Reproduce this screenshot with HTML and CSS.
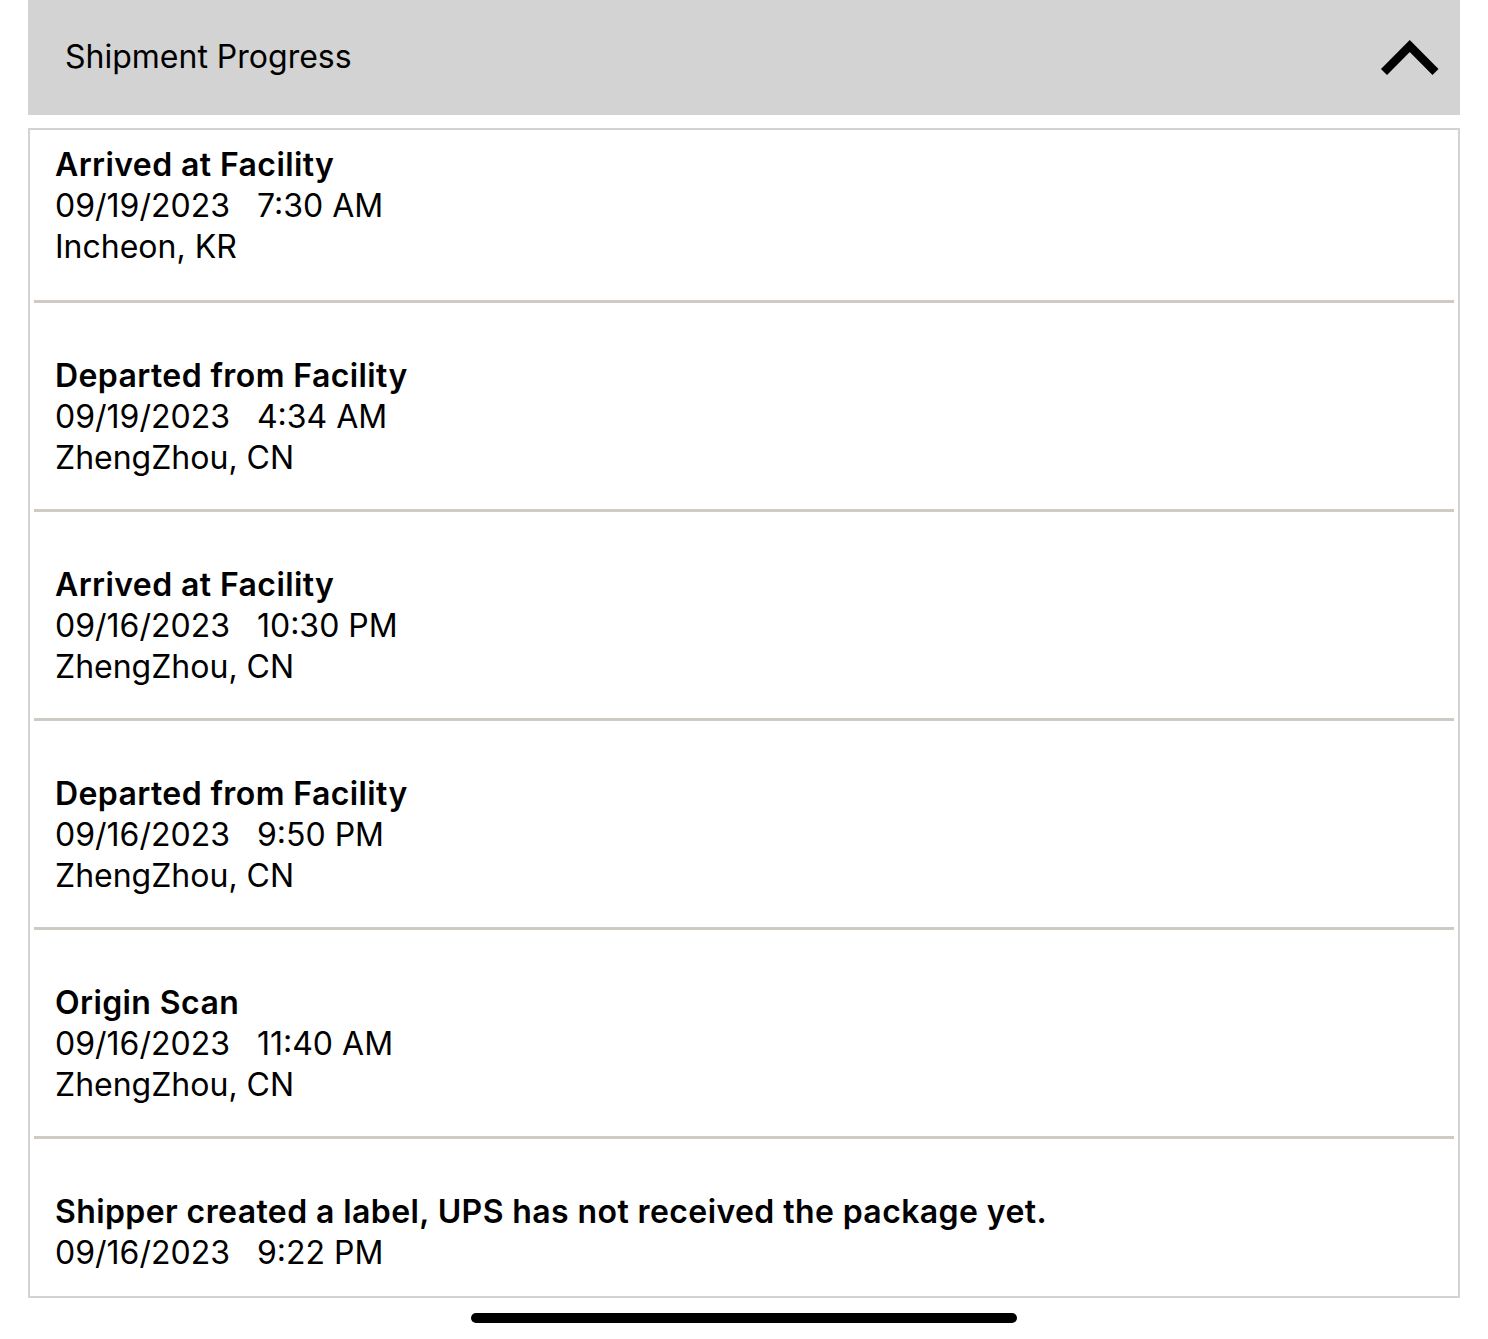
FILE: index.html
```html
<!DOCTYPE html>
<html lang="en">
<head>
<meta charset="utf-8">
<title>Shipment Progress</title>
<link rel="stylesheet" href="styles.css">
</head>
<body>
<div class="page">
  <div class="panel-header">
    <span class="panel-title">Shipment Progress</span>
    <svg class="chevron" width="60" height="44" viewBox="0 0 60 44" aria-hidden="true">
      <polyline points="4,40 29.75,14 55.5,40" fill="none" stroke="#000" stroke-width="8.5" stroke-linecap="butt" stroke-linejoin="miter"/>
    </svg>
  </div>
  <div class="events">
    <div class="event event-first">
      <div class="event-title">Arrived at Facility</div>
      <div class="event-line">09/19/2023   7:30 AM</div>
      <div class="event-line">Incheon, KR</div>
    </div>
    <div class="event">
      <div class="event-title">Departed from Facility</div>
      <div class="event-line">09/19/2023   4:34 AM</div>
      <div class="event-line">ZhengZhou, CN</div>
    </div>
    <div class="event">
      <div class="event-title">Arrived at Facility</div>
      <div class="event-line">09/16/2023   10:30 PM</div>
      <div class="event-line">ZhengZhou, CN</div>
    </div>
    <div class="event">
      <div class="event-title">Departed from Facility</div>
      <div class="event-line">09/16/2023   9:50 PM</div>
      <div class="event-line">ZhengZhou, CN</div>
    </div>
    <div class="event">
      <div class="event-title">Origin Scan</div>
      <div class="event-line">09/16/2023   11:40 AM</div>
      <div class="event-line">ZhengZhou, CN</div>
    </div>
    <div class="event event-last">
      <div class="event-title">Shipper created a label, UPS has not received the package yet.</div>
      <div class="event-line">09/16/2023   9:22 PM</div>
    </div>
  </div>
  <div class="home-row">
    <div class="home-indicator"></div>
  </div>
</div>
</body>
</html>
```

FILE: styles.css
```css
* { box-sizing: border-box; }

html, body {
  margin: 0;
  padding: 0;
  background: #ffffff;
}

body {
  font-family: Inter, "Noto Sans", "Liberation Sans", sans-serif;
  color: #000;
}

.page {
  width: 1488px;
  padding: 0 28px;
}

.panel-header {
  height: 115px;
  background: #d3d3d3;
  display: flex;
  align-items: center;
  justify-content: space-between;
  padding: 0 20px 0 37px;
}

.panel-title {
  font-size: 32px;
  font-weight: 400;
  position: relative;
  top: -1px;
}

.chevron {
  display: block;
  margin-top: -7px;
}

.events {
  margin-top: 13px;
  border: 2px solid #d3d3d3;
}

.event {
  margin: 0 4px;
  padding: 52px 21px 31px;
  border-top: 3px solid #cfcac4;
  font-size: 32px;
  line-height: 41px;
}

.event-first {
  border-top: none;
  padding-top: 14px;
  padding-bottom: 33px;
}

.event-last {
  padding-bottom: 23px;
}

.event-title {
  font-weight: 600;
  letter-spacing: 0.4px;
}

.event-line {
  white-space: pre;
  font-weight: 400;
}

.home-row {
  display: flex;
  justify-content: center;
  padding-top: 15px;
}

.home-indicator {
  width: 546px;
  height: 10px;
  border-radius: 5px;
  background: #000;
}
```
